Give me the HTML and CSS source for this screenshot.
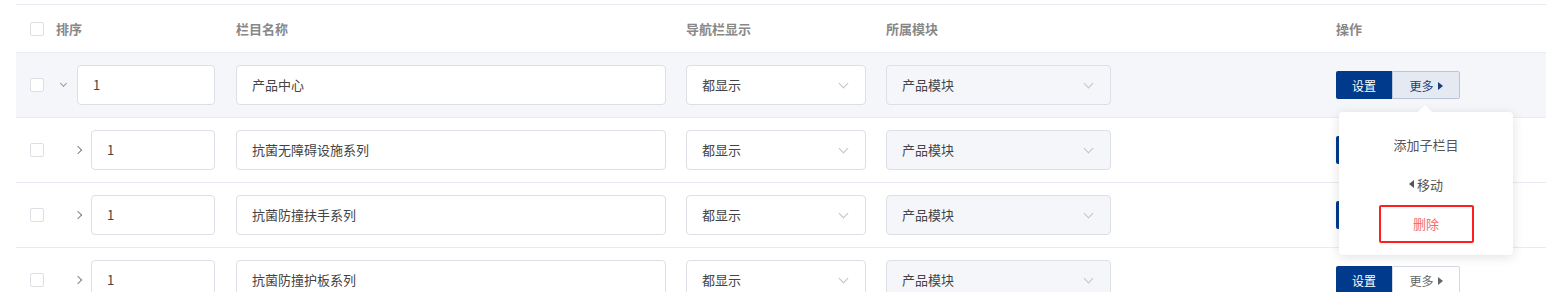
FILE: index.html
```html
<!DOCTYPE html>
<html lang="zh-CN">
<head>
  <meta charset="UTF-8">
  <title>栏目管理</title>
  <link rel="stylesheet" href="styles.css">
</head>
<body>
  <div class="table">
    <div class="row head">
      <div class="cell"><span class="check"></span></div>
      <div class="cell">排序</div>
      <div class="cell">栏目名称</div>
      <div class="cell">导航栏显示</div>
      <div class="cell">所属模块</div>
      <div class="cell">操作</div>
    </div>

    <div class="row on">
      <div class="cell"><span class="check"></span></div>
      <div class="cell sort">
        <span class="arrow-box"><span class="arrow down"></span></span>
        <div class="input">1</div>
      </div>
      <div class="cell"><div class="input name">产品中心</div></div>
      <div class="cell"><div class="select nav">都显示</div></div>
      <div class="cell"><div class="select module">产品模块</div></div>
      <div class="cell ops">
        <button class="btn-set">设置</button>
        <button class="btn-more">更多</button>
        <!-- 更多 메뉴 -->
        <ul class="menu">
          <li>添加子栏目</li>
          <li><span class="tri-left"></span>移动</li>
          <li><span class="del">删除</span></li>
        </ul>
      </div>
    </div>

    <div class="row">
      <div class="cell"><span class="check"></span></div>
      <div class="cell sort child">
        <span class="arrow-box"><span class="arrow"></span></span>
        <div class="input">1</div>
      </div>
      <div class="cell"><div class="input name">抗菌无障碍设施系列</div></div>
      <div class="cell"><div class="select nav">都显示</div></div>
      <div class="cell"><div class="select module">产品模块</div></div>
      <div class="cell ops">
        <button class="btn-set">设置</button>
        <button class="btn-more">更多</button>
      </div>
    </div>

    <div class="row">
      <div class="cell"><span class="check"></span></div>
      <div class="cell sort child">
        <span class="arrow-box"><span class="arrow"></span></span>
        <div class="input">1</div>
      </div>
      <div class="cell"><div class="input name">抗菌防撞扶手系列</div></div>
      <div class="cell"><div class="select nav">都显示</div></div>
      <div class="cell"><div class="select module">产品模块</div></div>
      <div class="cell ops">
        <button class="btn-set">设置</button>
        <button class="btn-more">更多</button>
      </div>
    </div>

    <div class="row">
      <div class="cell"><span class="check"></span></div>
      <div class="cell sort child">
        <span class="arrow-box"><span class="arrow"></span></span>
        <div class="input">1</div>
      </div>
      <div class="cell"><div class="input name">抗菌防撞护板系列</div></div>
      <div class="cell"><div class="select nav">都显示</div></div>
      <div class="cell"><div class="select module">产品模块</div></div>
      <div class="cell ops">
        <button class="btn-set">设置</button>
        <button class="btn-more">更多</button>
      </div>
    </div>
  </div>
</body>
</html>
```

FILE: styles.css
```css
html,
body {
  margin: 0;
  background: #fff;
}

body {
  padding: 4px 14px 0 16px;
  font-family: "Noto Sans CJK SC", "Noto Sans", sans-serif;
  font-size: 13px;
  color: #333;
  overflow: hidden;
}

ul,
li {
  list-style: none;
  margin: 0;
  padding: 0;
}

button {
  cursor: pointer;
  font-family: inherit;
}

.table {
  border-top: 1px solid #e8ebf2;
}

.row {
  display: grid;
  grid-template-columns: 40px 180px 450px 200px 450px 1fr;
  align-items: center;
  height: 65px;
  border-bottom: 1px solid #e8ebf2;
  box-sizing: border-box;
}

.row.head {
  height: 48px;
  color: #888;
  font-weight: bold;
}

.row.on {
  background: #f5f6fa;
}

.cell {
  display: flex;
  align-items: center;
  position: relative;
}

/* 체크박스 */
.check {
  width: 12px;
  height: 12px;
  margin-left: 14px;
  border: 1px solid #dcdfe6;
  border-radius: 2px;
  background: #fff;
}

/* 정렬 */
.sort .input {
  flex: 1;
  margin-right: 21px;
}

.arrow-box {
  width: 21px;
  height: 20px;
  flex: none;
  display: flex;
  align-items: center;
  padding-left: 5px;
  box-sizing: border-box;
}

.sort.child .arrow-box {
  width: 35px;
  padding-left: 19px;
}

.arrow {
  width: 5px;
  height: 5px;
  border-top: 1px solid #7a8699;
  border-right: 1px solid #7a8699;
  transform: rotate(45deg);
}

.arrow.down {
  width: 4px;
  height: 4px;
  border-color: #8e9aac;
  transform: translateY(-2px) rotate(135deg);
}

.input,
.select {
  height: 40px;
  line-height: 38px;
  border: 1px solid #dcdfe6;
  border-radius: 4px;
  background: #fff;
  box-sizing: border-box;
  padding: 0 15px;
  color: #444;
}

.input.name {
  width: 430px;
}

.select {
  position: relative;
}

.select.nav {
  width: 180px;
}

.select.module {
  width: 225px;
  background: #f5f6fa;
}

.select::after {
  content: "";
  position: absolute;
  right: 18px;
  top: 14px;
  width: 6px;
  height: 6px;
  border-right: 1px solid #c0c4cc;
  border-bottom: 1px solid #c0c4cc;
  transform: rotate(45deg);
}

/* 버튼 */
.btn-set {
  width: 56px;
  height: 28px;
  border: none;
  border-radius: 2px 0 0 2px;
  background: #003a8c;
  color: #fff;
  font-size: 12px;
}

.btn-more {
  width: 68px;
  height: 28px;
  border: 1px solid #d4d8e2;
  border-radius: 0 2px 2px 0;
  background: #fff;
  color: #666;
  font-size: 12px;
}

.btn-more::after {
  content: "";
  display: inline-block;
  margin-left: 4px;
  vertical-align: 1px;
  border-left: 5px solid #666;
  border-top: 4px solid transparent;
  border-bottom: 4px solid transparent;
}

.row.on .btn-more {
  background: #e4e9f2;
  border-color: #b9c5d9;
  color: #1d3c78;
}

.row.on .btn-more::after {
  border-left-color: #1d3c78;
}

/* 더보기 메뉴 */
.menu {
  position: absolute;
  top: 41px;
  left: 3px;
  z-index: 2;
  width: 174px;
  height: 143px;
  padding-top: 12px;
  box-sizing: border-box;
  background: #fff;
  border-radius: 4px;
  box-shadow: 0 2px 12px rgba(0, 0, 0, 0.12);
  color: #555;
}

.menu::before {
  content: "";
  position: absolute;
  top: -5px;
  left: 81px;
  width: 10px;
  height: 10px;
  background: #fff;
  transform: rotate(45deg);
}

.menu li {
  height: 40px;
  display: flex;
  align-items: center;
  justify-content: center;
}

.tri-left {
  display: inline-block;
  margin-right: 3px;
  border-right: 5px solid #555;
  border-top: 4px solid transparent;
  border-bottom: 4px solid transparent;
}

.del {
  width: 95px;
  height: 38px;
  line-height: 34px;
  text-align: center;
  box-sizing: border-box;
  border: 2px solid #ff1f1f;
  border-radius: 2px;
  color: #f56c6c;
}
```
